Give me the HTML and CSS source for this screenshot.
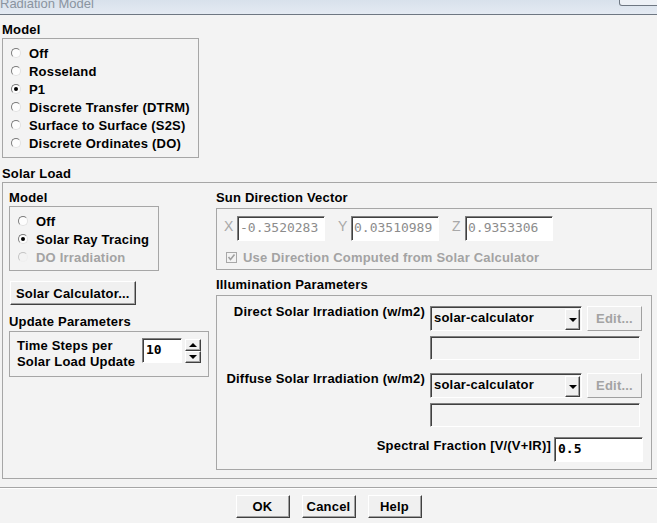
FILE: index.html
```html
<!DOCTYPE html>
<html lang="en">
<head>
  <meta charset="UTF-8" />
  <title>Radiation Model</title>
  <link rel="stylesheet" href="styles.css">
</head>
<body>

  <!-- Window title bar -->
  <div class="titlebar">
    <span class="title">Radiation Model</span>
    <span class="title-btn"></span>
  </div>

  <div class="content">

    <!-- Radiation model choice -->
    <div class="heading">Model</div>
    <div class="group model-main">
      <div class="radio-row"><span class="radio"></span>Off</div>
      <div class="radio-row"><span class="radio"></span>Rosseland</div>
      <div class="radio-row"><span class="radio checked"></span>P1</div>
      <div class="radio-row"><span class="radio"></span>Discrete Transfer (DTRM)</div>
      <div class="radio-row"><span class="radio"></span>Surface to Surface (S2S)</div>
      <div class="radio-row"><span class="radio"></span>Discrete Ordinates (DO)</div>
    </div>

    <!-- Solar load -->
    <div class="heading solar-heading">Solar Load</div>
    <div class="frame">

      <div class="left-col">
        <div class="heading">Model</div>
        <div class="group model-sub">
          <div class="radio-row"><span class="radio"></span>Off</div>
          <div class="radio-row"><span class="radio checked"></span>Solar Ray Tracing</div>
          <div class="radio-row disabled"><span class="radio"></span>DO Irradiation</div>
        </div>

        <button class="btn calc-btn">Solar Calculator...</button>

        <div class="heading update-heading">Update Parameters</div>
        <div class="group update-box">
          <div class="update-text">Time Steps per<br>Solar Load Update</div>
          <div class="field spin-field">10</div>
          <div class="spinner">
            <span class="spin-btn"><span class="arrow-up"></span></span>
            <span class="spin-btn"><span class="arrow-down"></span></span>
          </div>
        </div>
      </div>

      <div class="right-col">
        <div class="heading">Sun Direction Vector</div>
        <div class="group sun-box">
          <div class="vector-row">
            <div class="vec"><span class="axis">X</span><span class="field vec-field">-0.3520283</span></div>
            <div class="vec"><span class="axis">Y</span><span class="field vec-field">0.03510989</span></div>
            <div class="vec"><span class="axis">Z</span><span class="field vec-field">0.9353306</span></div>
          </div>
          <div class="check-row">
            <svg class="checkbox" width="11" height="11" viewBox="0 0 11 11">
              <rect x="0.5" y="0.5" width="10" height="10" fill="#f3f3f3" stroke="#a8a8a8"/>
              <path d="M2.5 5 L4.5 7.5 L8.5 2.5" fill="none" stroke="#a0a0a0" stroke-width="1.6"/>
            </svg>
            Use Direction Computed from Solar Calculator
          </div>
        </div>

        <div class="heading illum-heading">Illumination Parameters</div>
        <div class="group illum-box">
          <div class="irr-block">
            <div class="irr-label">Direct Solar Irradiation (w/m2)</div>
            <div class="irr-controls">
              <div class="combo-row">
                <div class="field combo">solar-calculator<span class="combo-btn"><span class="arrow-down"></span></span></div>
                <button class="btn edit-btn">Edit...</button>
              </div>
              <div class="field empty-field"></div>
            </div>
          </div>
          <div class="irr-block second">
            <div class="irr-label">Diffuse Solar Irradiation (w/m2)</div>
            <div class="irr-controls">
              <div class="combo-row">
                <div class="field combo">solar-calculator<span class="combo-btn"><span class="arrow-down"></span></span></div>
                <button class="btn edit-btn">Edit...</button>
              </div>
              <div class="field empty-field"></div>
            </div>
          </div>
          <div class="spectral-row">
            <span>Spectral Fraction [V/(V+IR)]</span>
            <span class="field spectral-field">0.5</span>
          </div>
        </div>
      </div>

    </div>

    <div class="separator"></div>

    <div class="btn-group">
      <button class="btn dlg-btn">OK</button>
      <button class="btn dlg-btn">Cancel</button>
      <button class="btn dlg-btn">Help</button>
    </div>
  </div>

</body>
</html>
```

FILE: styles.css
```css
* {
  box-sizing: border-box;
}

html, body {
  margin: 0;
  padding: 0;
}

body {
  width: 657px;
  height: 523px;
  overflow: hidden;
  background: #f3f3f3;
  font-family: "Liberation Sans", Arial, sans-serif;
  font-size: 13px;
  font-weight: bold;
  letter-spacing: 0.2px;
  color: #000;
}

/* title bar */
.titlebar {
  height: 15px;
  border-bottom: 1px solid #6e7782;
  background: linear-gradient(#d8e1eb, #e4eaf2);
  display: flex;
  justify-content: space-between;
  overflow: hidden;
}

.title {
  font-weight: normal;
  color: #8a94a0;
  line-height: 15px;
  margin-top: -4px;
  letter-spacing: 0;
}

.title-btn {
  width: 40px;
  height: 6px;
  margin-right: -2px;
  border: 1px solid #6e7782;
  border-top: none;
  border-radius: 0 0 0 3px;
  background: #edf1f6;
}

.content {
  width: 660px;
  padding: 7px 0 0 2px;
}

.heading {
  line-height: 16px;
  white-space: nowrap;
}

.group {
  border: 1px solid #a6a6a6;
}

/* radio buttons */
.radio-row {
  display: flex;
  align-items: center;
  gap: 8px;
  height: 18px;
  padding-left: 8px;
  white-space: nowrap;
}

.radio-row.disabled {
  color: #a3a3a3;
}

.radio {
  position: relative;
  width: 10px;
  height: 10px;
  border-radius: 50%;
  border: 1px solid;
  border-color: #7a7a7a #e2e2e2 #e2e2e2 #7a7a7a;
  background: #fdfdfd;
  flex: none;
}

.radio-row.disabled .radio {
  border-color: #c4c4c4 #eeeeee #eeeeee #c4c4c4;
  background: #f3f3f3;
}

.radio.checked::after {
  content: "";
  position: absolute;
  left: 2px;
  top: 2px;
  width: 4px;
  height: 4px;
  border-radius: 50%;
  background: #000;
}

.model-main {
  width: 197px;
  padding: 5px 0;
}

.solar-heading {
  margin-top: 8px;
}

.frame {
  display: flex;
  gap: 7px;
  border: 1px solid #a6a6a6;
  padding: 7px 7px 8px 6px;
}

/* left column */
.left-col {
  width: 200px;
  flex: none;
}

.model-sub {
  width: 150px;
  padding: 5px 0 4px;
}

.btn {
  font-family: inherit;
  font-size: 13px;
  font-weight: bold;
  letter-spacing: 0.2px;
  color: #000;
  background: #f0f0f0;
  border: 1px solid;
  border-color: #fff #404040 #404040 #fff;
  box-shadow: inset -1px -1px 0 #a0a0a0;
  padding: 0 6px;
  margin: 0;
  cursor: pointer;
}

.calc-btn {
  display: block;
  height: 24px;
  padding: 0 5px;
  margin: 10px 0 0 1px;
}

.update-heading {
  margin: 9px 0 1px;
}

.update-box {
  display: flex;
  align-items: flex-start;
  padding: 6px 6px 6px 7px;
}

.update-text {
  width: 125px;
  line-height: 16px;
  white-space: nowrap;
}

.field {
  border: 1px solid;
  border-color: #808080 #fff #fff #808080;
  box-shadow: inset 1px 1px 0 #404040;
  background: #fff;
  font-family: "DejaVu Sans Mono", monospace;
  font-size: 13px;
  font-weight: bold;
  letter-spacing: 0;
  padding-left: 3px;
  line-height: 22px;
  white-space: nowrap;
  overflow: hidden;
}

.spin-field {
  width: 40px;
  height: 25px;
}

.spinner {
  display: flex;
  flex-direction: column;
  margin: 1px 0 0 3px;
}

.spin-btn {
  display: flex;
  align-items: center;
  justify-content: center;
  width: 16px;
  height: 12px;
  background: #f0f0f0;
  border: 1px solid;
  border-color: #fff #404040 #404040 #fff;
  box-shadow: inset -1px -1px 0 #a0a0a0;
}

.arrow-up {
  width: 0;
  height: 0;
  border-left: 4px solid transparent;
  border-right: 4px solid transparent;
  border-bottom: 4px solid #000;
}

.arrow-down {
  width: 0;
  height: 0;
  border-left: 4px solid transparent;
  border-right: 4px solid transparent;
  border-top: 4px solid #000;
}

/* right column */
.right-col {
  flex: 1;
}

.sun-box {
  margin-top: 2px;
  padding: 7px 7px 4px 7px;
}

.vector-row {
  display: flex;
  gap: 13px;
}

.vec {
  display: flex;
  align-items: center;
}

.axis {
  width: 13px;
  font-weight: normal;
  font-size: 14px;
  color: #a8a8a8;
  line-height: 16px;
  margin-top: -6px;
}

.vec-field {
  width: 88px;
  height: 25px;
  font-weight: normal;
  color: #8c8c8c;
  padding-left: 2px;
}

.check-row {
  display: flex;
  align-items: center;
  gap: 6px;
  height: 16px;
  margin-top: 8px;
  padding-left: 2px;
  color: #a3a3a3;
  white-space: nowrap;
}

.checkbox {
  flex: none;
}

.illum-heading {
  margin: 7px 0 2px;
}

.illum-box {
  padding: 10px 9px 7px 0;
}

.irr-block {
  display: flex;
  gap: 5px;
  margin-bottom: 13px;
}

.irr-block.second {
  margin-bottom: 10px;
}

.irr-label {
  flex: 1;
  text-align: right;
  line-height: 12px;
  white-space: nowrap;
}

.irr-controls {
  width: 212px;
  display: flex;
  flex-direction: column;
  gap: 5px;
}

.combo-row {
  display: flex;
  gap: 5px;
}

.combo {
  position: relative;
  width: 152px;
  height: 25px;
  background: #f3f3f3;
  font-family: "Liberation Sans", Arial, sans-serif;
  letter-spacing: 0.2px;
  padding-left: 3px;
}

.combo-btn {
  position: absolute;
  right: 1px;
  top: 2px;
  width: 15px;
  height: 21px;
  display: flex;
  align-items: center;
  justify-content: center;
  background: #f0f0f0;
  border: 1px solid;
  border-color: #fff #404040 #404040 #fff;
  box-shadow: inset -1px -1px 0 #a0a0a0;
}

.edit-btn {
  width: 55px;
  height: 25px;
  padding: 0;
  color: #a3a3a3;
  border-color: #fff #a0a0a0 #a0a0a0 #fff;
  box-shadow: none;
}

.empty-field {
  width: 210px;
  height: 24px;
  background: #f3f3f3;
}

.spectral-row {
  display: flex;
  justify-content: flex-end;
  align-items: center;
  gap: 3px;
}

.spectral-row span:first-child {
  margin-top: -8px;
}

.spectral-field {
  width: 89px;
  height: 25px;
  margin-right: -1px;
}

/* bottom buttons */
.separator {
  margin-top: 8px;
  margin-left: -2px;
  border-top: 1px solid #a6a6a6;
  border-bottom: 1px solid #fff;
}

.btn-group {
  display: flex;
  justify-content: center;
  gap: 12px;
  width: 657px;
  margin: 6px 0 0 -2px;
}

.dlg-btn {
  width: 54px;
  height: 23px;
  padding: 0;
}
```
